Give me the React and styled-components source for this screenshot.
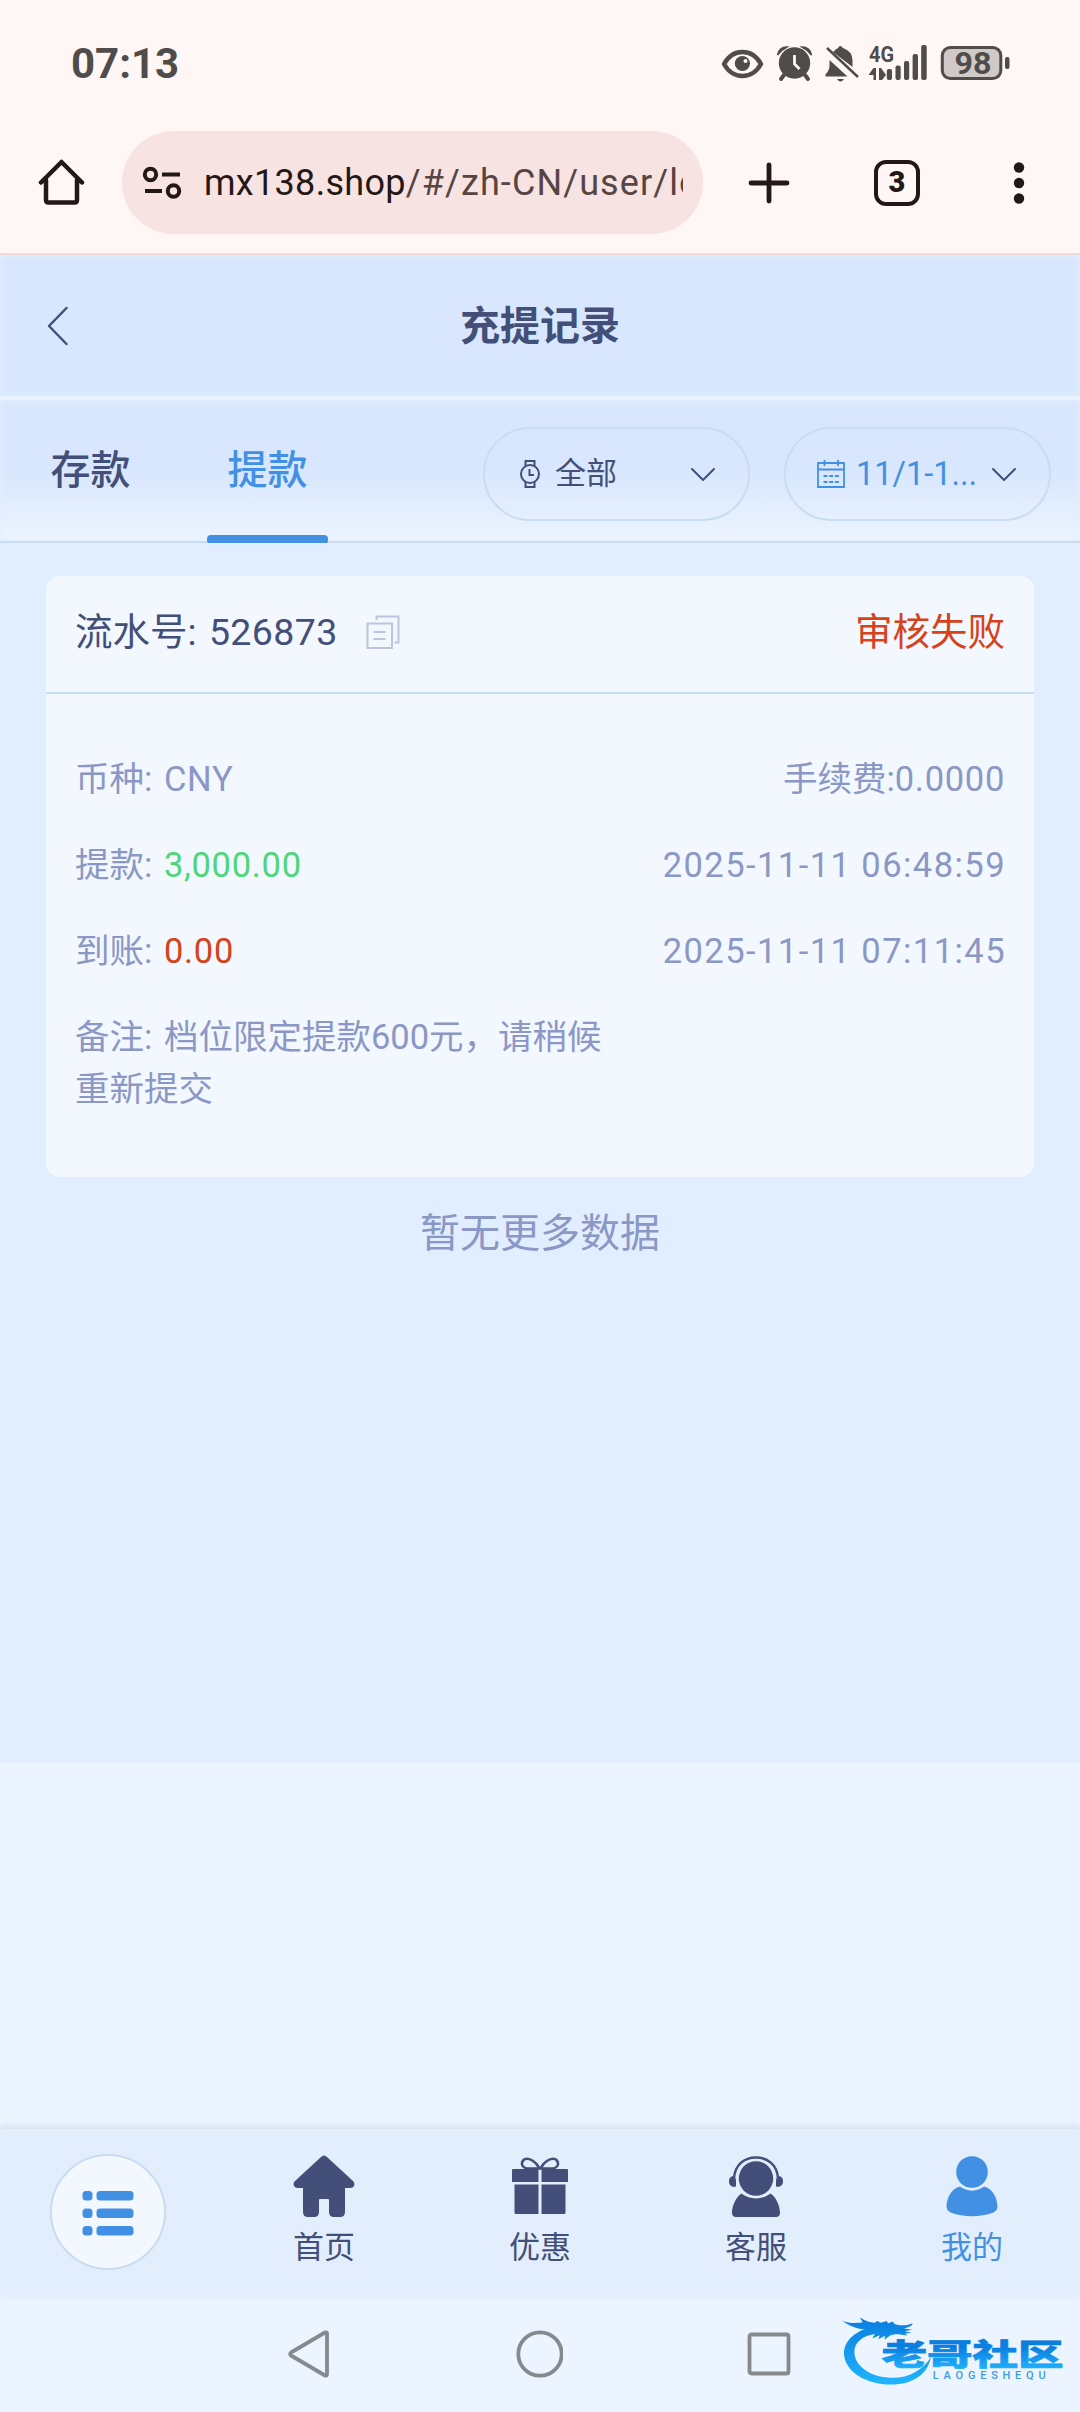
import React from 'react';
import styled, { createGlobalStyle } from 'styled-components';

const colors = {
  chrome: '#fff7f5',
  omnibox: '#f7e3e1',
  ink: '#241817',
  status: '#4f4c4b',
  navy: '#434f78',
  blue: '#4290e4',
  muted: '#8b97c4',
  line: '#c8dcf2',
  green: '#4fd67a',
  red: '#d6421a',
};

const GlobalStyle = createGlobalStyle`
  * {
    box-sizing: border-box;
  }

  body {
    margin: 0;
    background: #ecf4ff;
    font-family: Roboto, 'Noto Sans CJK SC', sans-serif;
  }

  svg {
    display: block;
    flex: none;
  }
`;

const Screen = styled.div`
  display: flex;
  flex-direction: column;
  width: 1080px;
  height: 2412px;
  overflow: hidden;
  background: #ecf4ff;
`;

/* Phone status bar */

const StatusBar = styled.div`
  display: flex;
  align-items: center;
  height: 128px;
  padding: 0 70px 0 71px;
  background: ${colors.chrome};
  color: ${colors.status};
`;

const Clock = styled.div`
  flex: 1;
  font-size: 42px;
  font-weight: 700;
  line-height: 50px;
`;

const StatusIcons = styled.svg`
  width: 290px;
  height: 40px;
  overflow: visible;
`;

/* Browser toolbar */

const Toolbar = styled.div`
  display: flex;
  align-items: center;
  height: 127px;
  padding: 3px 54px 19px 38px;
  border-bottom: 2px solid #f0dcdc;
  background: ${colors.chrome};
`;

const Omnibox = styled.div`
  display: flex;
  align-items: center;
  width: 581px;
  height: 103px;
  margin: 0 45px 0 37px;
  padding: 0 20px 0 20px;
  border-radius: 52px;
  background: ${colors.omnibox};
`;

const Url = styled.div`
  flex: 1;
  margin-left: 22px;
  overflow: hidden;
  color: #574543;
  font-size: 36px;
  letter-spacing: 1.1px;
  line-height: 50px;
  white-space: nowrap;

  b {
    color: ${colors.ink};
    font-weight: 400;
    letter-spacing: 0.3px;
  }
`;

const TabCount = styled.div`
  width: 46px;
  height: 46px;
  margin: 0 93px 0 84px;
  border: 4.5px solid ${colors.ink};
  border-radius: 12px;
  color: ${colors.ink};
  font-size: 29px;
  font-weight: 900;
  line-height: 37px;
  text-align: center;
`;

/* Page header and filters */

const Header = styled.header`
  display: grid;
  grid-template-columns: 120px 1fr 120px;
  align-items: center;
  height: 145px;
  padding-left: 46px;
  padding-right: 46px;
  border-bottom: 4px solid #e8f3ff;
  background: #d8e7fe;
  box-shadow: inset 0 0 7px #e4effe;
`;

const Title = styled.h1`
  margin: 3px 0 0;
  color: ${colors.navy};
  font-size: 40px;
  font-weight: 700;
  line-height: 60px;
  text-align: center;
`;

const FilterBar = styled.div`
  display: flex;
  align-items: flex-start;
  height: 143px;
  padding: 0 29px 0 30px;
  border-bottom: 2px solid ${colors.line};
  background: linear-gradient(#d8e7fe 50%, #dfebfc 68%, #ecf4ff);
  box-shadow: inset 0 0 7px #e4effe;
`;

const Tab = styled.div`
  display: flex;
  flex-direction: column;
  justify-content: space-between;
  width: 121px;
  height: 144px;
  margin-right: 56px;
  padding-top: 41px;
  color: ${({ $active }) => ($active ? colors.blue : colors.navy)};
  font-size: 40px;
  font-weight: 500;
  line-height: 60px;
  text-align: center;

  &::after {
    content: '';
    height: 9px;
    border-radius: 4px;
    background: ${({ $active }) => ($active ? colors.blue : 'transparent')};
  }
`;

const Filters = styled.div`
  display: flex;
  gap: 34px;
  margin: 27px 0 0 auto;
`;

const Pill = styled.div`
  display: flex;
  align-items: center;
  width: 267px;
  height: 94px;
  padding: 0 32px 0 ${({ $active }) => ($active ? 30 : 34)}px;
  border: 2px solid ${colors.line};
  border-radius: 47px;
  color: ${({ $active }) => ($active ? colors.blue : colors.navy)};
  line-height: 46px;

  span {
    flex: 1;
    margin-left: ${({ $active }) => ($active ? 10 : 14)}px;
    font-size: ${({ $active }) => ($active ? 32.5 : 31)}px;
    white-space: nowrap;
  }
`;

/* Records */

const Records = styled.main`
  height: 1219px;
  padding: 33px 46px 0;
  background: #e0eeff;
`;

const Card = styled.section`
  height: 601px;
  border-radius: 14px;
  background: #f3f8ff;
`;

const CardHead = styled.div`
  display: flex;
  align-items: center;
  height: 118px;
  padding: 0 29px 4px;
  border-bottom: 2px solid #c6def2;
  color: ${colors.navy};
  font-size: 37.5px;
  line-height: 56px;
  word-spacing: 3px;

  svg {
    margin-left: 28px;
  }
`;

const Serial = styled.span`
  letter-spacing: 0.4px;
`;

const Status = styled.div`
  margin-left: auto;
  color: ${colors.red};
`;

const CardBody = styled.div`
  display: flex;
  flex-direction: column;
  gap: 34px;
  padding: 59px 29px 0;
`;

const Row = styled.div`
  display: flex;
  justify-content: space-between;
  color: ${colors.muted};
  font-size: 34.5px;
  line-height: 52px;
`;

const Field = styled.div`
  max-width: 552px;
  word-spacing: 3px;
`;

const Value = styled.span`
  color: ${({ $color }) => $color};
  letter-spacing: 0.7px;
`;

const Time = styled.time`
  margin-right: -1px;
  letter-spacing: 1.45px;
`;

const NoMore = styled.p`
  margin: 27px 0 0;
  color: ${colors.muted};
  font-size: 40px;
  line-height: 60px;
  text-align: center;
`;

/* Bottom navigation */

const BottomNav = styled.nav`
  display: grid;
  grid-template-columns: repeat(5, 1fr);
  height: 167px;
  margin-top: auto;
  background: #e3eefd;
  box-shadow: 0 -2px 7px rgba(160, 175, 185, 0.35);
`;

const NavItem = styled.div`
  display: flex;
  flex-direction: column;
  align-items: center;
  padding-top: 25px;
  color: ${({ $active }) => ($active ? colors.blue : colors.navy)};
  font-size: 31px;
  line-height: 46px;

  svg {
    margin-bottom: 7px;
  }
`;

const MenuButton = styled.div`
  display: flex;
  align-items: center;
  justify-content: center;
  width: 116px;
  height: 116px;
  border: 2px solid ${colors.line};
  border-radius: 50%;
  background: #f3f8ff;

  svg {
    margin: 3px 0 0;
  }
`;

const SystemBar = styled.div`
  position: relative;
  display: flex;
  align-items: center;
  height: 116px;
  padding-left: 287px;
`;

const SystemKeys = styled.div`
  display: flex;
  align-items: center;
  justify-content: space-between;
  width: 504px;
`;

const Watermark = styled.svg`
  position: absolute;
  top: 17px;
  left: 840px;
  width: 227px;
  height: 77px;
`;

const StatusGlyphs = () => (
  <StatusIcons viewBox="720 44 290 40" fill="currentColor">
    <path d="M724 64C733 48 752 48 761 64C752 80 733 80 724 64Z" fill="none" stroke="currentColor" strokeWidth="4.5" strokeLinejoin="round" />
    <circle cx="742.4" cy="63.5" r="7.6" />
    <circle cx="745.5" cy="61" r="2" fill={colors.chrome} />
    <circle cx="794.5" cy="63" r="15.7" />
    <path d="M777.5 55A9 9 0 0 1 787 47Q781 50 777.5 55ZM811.5 55A9 9 0 0 0 802 47Q808 50 811.5 55Z" stroke="currentColor" strokeWidth="1.5" />
    <path d="m784 75-3 4M805 75l3 4" stroke="currentColor" strokeWidth="4" strokeLinecap="round" />
    <path d="M794.5 55v9l5 5" fill="none" stroke={colors.chrome} strokeWidth="2.8" />
    <path d="M825.5 76.5v-2q4-4 4-9V60l18 16.5ZM833 52q3-3 5-4 2-4 5 0 9 3 9.500 12v7Z" />
    <path d="m827 48 31 29" stroke="currentColor" strokeWidth="2.5" />
    <path d="M837 79h7q-3.500 5-7 0Z" />
    <text x="869" y="62" fontSize="22.5" fontWeight="700" textLength="25" lengthAdjust="spacingAndGlyphs">4G</text>
    <path d="m868.5 75 5-7h2.500v12h-2.500v-5ZM879 68h2l5 7-4 5h-3Z" />
    <rect x="886.8" y="69" width="5.2" height="11" rx="2" />
    <rect x="895.5" y="65.5" width="5.2" height="14.5" rx="2" />
    <rect x="904" y="61" width="5.2" height="19" rx="2" />
    <rect x="912.6" y="54" width="5.4" height="26" rx="2" />
    <rect x="921.2" y="45" width="5.5" height="35" rx="2" />
    <rect x="942.3" y="47.5" width="58.5" height="31" rx="8" fill="#cfc9c7" stroke="currentColor" strokeWidth="3" />
    <rect x="1005" y="57" width="4.5" height="12" rx="2" />
    <text x="954.5" y="73.5" fontSize="31" fontWeight="700" textLength="37" lengthAdjust="spacingAndGlyphs">98</text>
  </StatusIcons>
);

const HomeOutline = () => (
  <svg width="47" height="47" viewBox="0 0 47 47" fill="none" stroke={colors.ink} strokeWidth="4.5" strokeLinecap="round" strokeLinejoin="round">
    <path d="M3 23.5 23.5 3 44 23.5M8 21v20q0 2.500 2.500 2.500h26q2.500 0 2.500-2.500V21" />
  </svg>
);

const SiteSettings = () => (
  <svg width="40" height="34" viewBox="0 0 40 34" fill="none" stroke={colors.ink} strokeWidth="4">
    <circle cx="8.5" cy="8.5" r="5.7" />
    <circle cx="31.5" cy="25" r="5.7" />
    <path d="M20 8.5h18M3 25h17" />
  </svg>
);

const NewTab = () => (
  <svg width="42" height="42" viewBox="0 0 42 42" stroke={colors.ink} strokeWidth="4.8" strokeLinecap="round">
    <path d="M21 3v36M3 21h36" />
  </svg>
);

const More = () => (
  <svg width="12" height="42" viewBox="0 0 12 42" fill={colors.ink}>
    <circle cx="6" cy="5.5" r="5.2" />
    <circle cx="6" cy="21" r="5.2" />
    <circle cx="6" cy="36.5" r="5.2" />
  </svg>
);

const Back = () => (
  <svg width="24" height="40" viewBox="0 0 24 40" fill="none" stroke={colors.navy} strokeWidth="2.5" strokeLinecap="round" strokeLinejoin="round">
    <path d="M20.500 2 3 20l17.500 18" />
  </svg>
);

const Watch = () => (
  <svg width="22" height="30" viewBox="0 0 22 30" fill="none" stroke="currentColor" strokeWidth="2">
    <circle cx="11" cy="15" r="9" />
    <path d="M6.500 7V2h9v5M6.500 23v5h9v-5M10.500 10v6H15" />
  </svg>
);

const Calendar = () => (
  <svg width="30" height="30" viewBox="0 0 30 30" fill="none" stroke="currentColor" strokeWidth="1.8">
    <path d="M2 4h26v24H2ZM2 10.500h26M8.500 1v6M22 1v6" />
    <path d="M7.500 17H23M7.500 23H23" strokeDasharray="4 1.7" />
  </svg>
);

const Chevron = () => (
  <svg width="26" height="15" viewBox="0 0 26 15" fill="none" stroke={colors.navy} strokeWidth="2" strokeLinecap="round" strokeLinejoin="round">
    <path d="m2 2 11 11L24 2" />
  </svg>
);

const Copy = () => (
  <svg width="34" height="34" viewBox="0 0 34 34" fill="none" stroke="#bfc4dc" strokeWidth="2">
    <path d="M1.500 8.500h24.500V33H1.500ZM10.500 5V1.500H32.500v26H28.500M7.500 17H19.500M7.500 24H19.500" />
  </svg>
);

const MenuIcon = () => (
  <svg width="52" height="46" viewBox="0 0 52 46" fill={colors.blue}>
    {[0, 17.5, 35].map(y => (
      <g key={y}>
        <rect x="0.5" y={y} width="10" height="9.5" rx="3.5" />
        <rect x="14.5" y={y} width="37" height="9.5" rx="3.5" />
      </g>
    ))}
  </svg>
);

const HomeIcon = () => (
  <svg width="62" height="64" viewBox="0 0 62 64" fill="currentColor">
    <path d="M28 3q3-3 6 0l26 24c3 3 1 7-3 7h-5v24q0 5-5 5h-6q-5 0-5-5V46q0-1-1-1h-8q-1 0-1 1v12q0 5-5 5h-6q-5 0-5-5V34H5c-4 0-6-4-3-7Z" />
  </svg>
);

const GiftIcon = () => (
  <svg width="62" height="64" viewBox="0 0 62 64" fill="currentColor">
    <path d="M4 15h25.500v13H3V16q0-1 1-1ZM32.500 15h25.500q1 0 1 1v12H32.500ZM5.500 30.500h24v29.500H7q-1.500 0-1.500-1.500ZM32.500 30.500h24v28q0 1.500-1.500 1.500H32.500Z" />
    <path d="M30.500 14.500C27 7 19 3 15 5.500c-4 4-2 9 5 9ZM31.500 14.500C35 7 43 3 47 5.500c4 4 2 9-5 9Z" fill="none" stroke="currentColor" strokeWidth="2.5" />
  </svg>
);

const SupportIcon = () => (
  <svg width="62" height="64" viewBox="0 0 62 64" fill="currentColor">
    <circle cx="31" cy="24.5" r="17.2" />
    <path d="M9 24C10 11 19 3.500 31 3.500s21 7.500 22 20.500" fill="none" stroke="currentColor" strokeWidth="2.5" />
    <path d="M8 22q2 0 3 4v6.500c-4 1-7-1-7-5 0-3 1-5 4-5.500ZM54 22q-2 0-3 4v6.500c4 1 7-1 7-5 0-3-1-5-4-5.500Z" />
    <path d="M16.500 39.500c9 6.500 20 6.500 29 0C51 43 55 52 55 58.500q0 4.500-4 4.500H11q-4 0-4-4.500c0-6.500 4-15.500 9.500-19Z" />
  </svg>
);

const MineIcon = () => (
  <svg width="62" height="64" viewBox="0 0 62 64" fill="currentColor">
    <circle cx="31" cy="18" r="15.8" />
    <path d="M19 32.500c7 5.500 17 5.500 24 0C51 34 56 43 56.500 52q0 4.500-4 6.500c-14 5-29 5-43 0q-4-2-4-6.500C6 43 11 34 19 32.500Z" />
  </svg>
);

const BackKey = () => (
  <svg width="44" height="50" viewBox="0 0 44 50" fill="none" stroke="#868a8d" strokeWidth="3.8" strokeLinejoin="round">
    <path d="M40 4.500Q40 3 38 3.500L4 23.500q-1.500 1.500 0 3L38 46.500q2 .5 2-1.500V4.500Z" />
  </svg>
);

const HomeKey = () => (
  <svg width="48" height="48" viewBox="0 0 48 48" fill="none" stroke="#868a8d" strokeWidth="3.8">
    <circle cx="25" cy="24" r="21.7" />
  </svg>
);

const RecentKey = () => (
  <svg width="44" height="44" viewBox="0 0 44 44" fill="none" stroke="#868a8d" strokeWidth="3.8">
    <rect x="2.5" y="2.5" width="39" height="39" rx="2" />
  </svg>
);

const CommunityLogo = () => (
  <Watermark viewBox="60 40 680 230">
    <defs>
      <linearGradient id="dragon" x1="0" y1="60" x2="0" y2="250" gradientUnits="userSpaceOnUse">
        <stop offset="0" stopColor="#0a7fe0" />
        <stop offset="1" stopColor="#20b4fb" />
      </linearGradient>
      <linearGradient id="wordmark" x1="0" y1="0" x2="0" y2="1">
        <stop offset="0.3" stopColor="#0b7edf" />
        <stop offset="0.9" stopColor="#1fb0fb" />
      </linearGradient>
    </defs>
    <g fill="url(#dragon)">
      <path d="M170 78C105 90 70 125 72 163c3 52 66 91 140 91 68 0 112-33 120-82-23 38-66 62-112 62-66 0-115-33-117-76-1-30 24-52 70-57Z" />
      <path d="M66 62c22 10 42 8 62 6l-8-15c18 12 30 14 44 16l8-5 10 5 18-5 4 6 15-5 3 7c18 7 35 6 56-2-3 9-12 12-26 16l24 4-22 4 20 5-18 2 5 7c-24-6-40-6-52 0l-16 12 2-12-20 10 4-12-22 10 10-18-27 7 13-17c-26 4-60-5-87-26Z" />
    </g>
    <text x="184" y="195" fontSize="90" fontWeight="900" fill="url(#wordmark)" stroke="url(#wordmark)" strokeWidth="2" textLength="546" lengthAdjust="spacingAndGlyphs">老哥社区</text>
    <text x="338" y="236" fontSize="33" fontWeight="500" fill="#3c9be6" textLength="338">LAOGESHEQU</text>
  </Watermark>
);

const App = () => (
  <Screen>
    <GlobalStyle />
    <StatusBar>
      <Clock>07:13</Clock>
      <StatusGlyphs />
    </StatusBar>
    <Toolbar>
      <HomeOutline />
      <Omnibox>
        <SiteSettings />
        <Url><b>mx138.shop</b>/#/zh-CN/user/lo</Url>
      </Omnibox>
      <NewTab />
      <TabCount>3</TabCount>
      <More />
    </Toolbar>
    <Header>
      <Back />
      <Title>充提记录</Title>
    </Header>
    <FilterBar>
      <Tab>存款</Tab>
      <Tab $active>提款</Tab>
      <Filters>
        <Pill>
          <Watch />
          <span>全部</span>
          <Chevron />
        </Pill>
        <Pill $active>
          <Calendar />
          <span>11/1-1...</span>
          <Chevron />
        </Pill>
      </Filters>
    </FilterBar>
    <Records>
      <Card>
        <CardHead>
          <div>流水号: <Serial>526873</Serial></div>
          <Copy />
          <Status>审核失败</Status>
        </CardHead>
        <CardBody>
          <Row>
            <Field>币种: <Value>CNY</Value></Field>
            <Field>手续费:<Value>0.0000</Value></Field>
          </Row>
          <Row>
            <Field>提款: <Value $color={colors.green}>3,000.00</Value></Field>
            <Time>2025-11-11 06:48:59</Time>
          </Row>
          <Row>
            <Field>到账: <Value $color={colors.red}>0.00</Value></Field>
            <Time>2025-11-11 07:11:45</Time>
          </Row>
          <Row>
            <Field>备注: 档位限定提款600元，请稍候重新提交</Field>
          </Row>
        </CardBody>
      </Card>
      <NoMore>暂无更多数据</NoMore>
    </Records>
    <BottomNav>
      <NavItem>
        <MenuButton><MenuIcon /></MenuButton>
      </NavItem>
      <NavItem>
        <HomeIcon />
        首页
      </NavItem>
      <NavItem>
        <GiftIcon />
        优惠
      </NavItem>
      <NavItem>
        <SupportIcon />
        客服
      </NavItem>
      <NavItem $active>
        <MineIcon />
        我的
      </NavItem>
    </BottomNav>
    <SystemBar>
      <SystemKeys>
        <BackKey />
        <HomeKey />
        <RecentKey />
      </SystemKeys>
      <CommunityLogo />
    </SystemBar>
  </Screen>
);

export default App;
